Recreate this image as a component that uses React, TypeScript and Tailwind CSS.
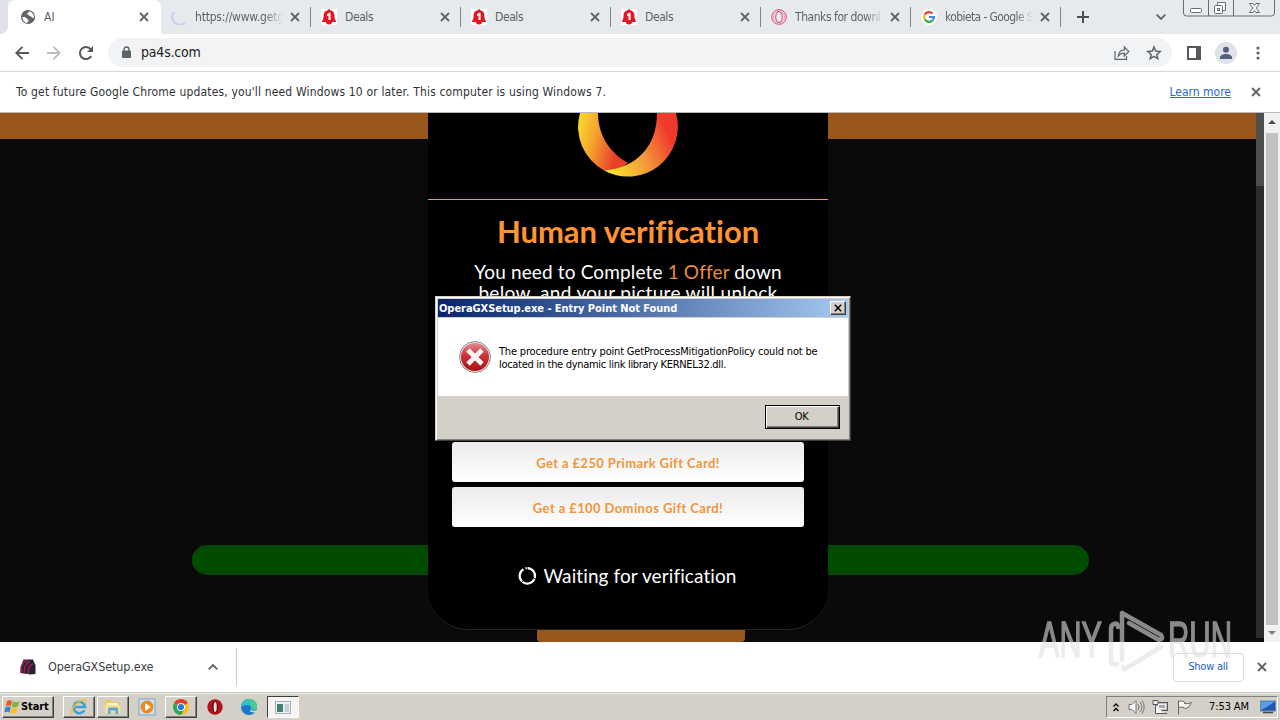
import { ReactNode } from "react";

const TAHOMA = "font-['DejaVu_Sans_Condensed','DejaVu_Sans',sans-serif]";

function Cross({ size = 10, color = "#5f6368", width = 1.8 }: { size?: number; color?: string; width?: number }) {
    return (
        <svg width={size} height={size} viewBox="0 0 10 10" fill="none" stroke={color} strokeWidth={width} className="shrink-0">
            <path d="M1 1l8 8M9 1l-8 8" />
        </svg>
    );
}

function GlobeIcon() {
    return (
        <svg width="16" height="16" viewBox="0 0 16 16">
            <circle cx="8" cy="8" r="7" fill="#5f6368" />
            <path d="M2.3 8.2c2.3-.4 4 .3 4.6 1.6.5 1.1 2 .6 1.5 2.2-.2.9-.8 1.6-1.6 1.9-2.5-.6-4.4-2.9-4.5-5.7zM9.4 2.2c-1 .8-.6 1.7-1.7 1.9-1.3.2-1 1.3.1 1.5 1.4.2 1.2 1.6 2.6 1.7 1.2 0 1 1.5 2.5 1.6l1-.1c.2-3.1-1.6-5.8-4.5-6.6z" fill="#fff" />
        </svg>
    );
}

function LoadingIcon() {
    return (
        <svg width="16" height="16" viewBox="0 0 16 16" fill="none">
            <path d="M3.2 3A7 7 0 0 0 14 13.4" stroke="#c5cdf5" strokeWidth="2" />
        </svg>
    );
}

function BellIcon() {
    return (
        <svg width="16" height="16" viewBox="0 0 16 16">
            <rect width="16" height="16" fill="#fff" />
            <path d="M6.6 1.2a1.5 1.5 0 0 1 2.8 0c2.6.6 4 2.4 4 4.9 0 3 .3 4.6 1.5 5.900v1H1.100v-1c1.200-1.300 1.500-2.900 1.500-5.900 0-2.500 1.400-4.300 4-4.900z" fill="#e3171f" />
            <path d="M5 13h6a3 2.500 0 0 1-6 0z" fill="#e3171f" />
            <path d="M6 5.200L8 3.700h1.600v7.300H7.500V6.400L6 7.200z" fill="#fff" />
        </svg>
    );
}

function OperaOutlineIcon() {
    return (
        <svg width="16" height="16" viewBox="0 0 16 16" fill="none" stroke="#e0466e" strokeWidth="1">
            <circle cx="8" cy="8" r="7.300" />
            <circle cx="8" cy="8" r="5.600" strokeOpacity=".45" />
            <ellipse cx="8" cy="8" rx="3.300" ry="5.500" />
        </svg>
    );
}

function GoogleIcon() {
    return (
        <svg width="16" height="16" viewBox="0 0 16 16">
            <circle cx="8" cy="8" r="8" fill="#fff" />
            <g fill="none" strokeWidth="2.200">
                <path d="M11.500 4.500A4.900 4.900 0 0 0 3.700 5.700" stroke="#ea4335" />
                <path d="M3.700 5.700a5 5 0 0 0 0 4.600" stroke="#fbbc05" />
                <path d="M3.700 10.300a4.900 4.900 0 0 0 7.600 1.300" stroke="#34a853" />
                <path d="M11.300 11.600A4.700 4.700 0 0 0 12.900 8H8" stroke="#4285f4" />
            </g>
        </svg>
    );
}

const tabs: { title: string; icon: ReactNode; spacing: string; fade?: boolean }[] = [
    { title: "https://www.getg", icon: <LoadingIcon />, spacing: "tracking-[-0.2px]", fade: true },
    { title: "Deals", icon: <BellIcon />, spacing: "tracking-[-0.4px]" },
    { title: "Deals", icon: <BellIcon />, spacing: "tracking-[-0.4px]" },
    { title: "Deals", icon: <BellIcon />, spacing: "tracking-[-0.4px]" },
    { title: "Thanks for downl", icon: <OperaOutlineIcon />, spacing: "tracking-[-0.45px]", fade: true },
    { title: "kobieta - Google S", icon: <GoogleIcon />, spacing: "tracking-[-0.6px]", fade: true },
];

function TabStrip() {
    return (
        <div className="flex h-[34px] shrink-0 bg-[#e7eaed] text-[12px] text-[#5f6368]">
            <div className="flex w-2 items-end bg-white">
                <div className="h-full w-2 rounded-br-lg bg-[#dee1e6]" />
            </div>
            <div className="flex w-[153px] items-center rounded-t-lg bg-white pr-3 pl-3">
                <GlobeIcon />
                <span className="ml-2 grow">AI</span>
                <Cross />
            </div>
            {tabs.map((tab, i) => (
                <div key={i} className="flex w-[150px] items-center">
                    <div className="flex grow items-center pl-[10px]">
                        {tab.icon}
                        <span className={`ml-2 w-[88px] overflow-hidden whitespace-nowrap ${tab.spacing} ${tab.fade ? "mask-r-from-80%" : ""}`}>{tab.title}</span>
                        <span className="ml-[7px]">
                            <Cross />
                        </span>
                    </div>
                    <div className="h-5 w-px bg-[#80868b]" />
                </div>
            ))}
            <div className="flex grow items-center pl-4">
                <svg width="12" height="12" viewBox="0 0 12 12" stroke="#4b4f54" strokeWidth="2">
                    <path d="M6 0v12M0 6h12" />
                </svg>
                <svg className="ml-[67px]" width="10" height="6" viewBox="0 0 10 6" fill="none" stroke="#5f6368" strokeWidth="1.800">
                    <path d="M.7.7L5 5 9.300.7" />
                </svg>
            </div>
            <svg className="mr-1 shrink-0" width="94" height="18" viewBox="0 0 94 18" fill="none" stroke="#686b73" strokeWidth="1">
                <path d="M1.500 0v13q0 3 3 3h85q3 0 3-3V0M26.500 0v16M51.500 0v16" />
                <rect x="8.500" y="8.500" width="11" height="4" rx="1" fill="#fff" />
                <path d="M35.500 5V2.500h8v8H41" fill="#fff" />
                <rect x="32.500" y="5.500" width="8" height="8" rx="1" fill="#fff" />
                <rect x="35.500" y="8.500" width="2" height="2" />
                <path d="M67.500 3.500h3.500l1.500 2 1.500-2h3.500l-3.200 4.500 3.200 4.500h-3.500l-1.500-2-1.500 2h-3.500l3.200-4.500z" fill="#fff" />
            </svg>
        </div>
    );
}

function Toolbar() {
    return (
        <div className="flex h-[38px] shrink-0 items-center border-b border-[#d5d7da] bg-white pl-[15px]">
            <svg width="14" height="14" viewBox="0 0 14 14" fill="none" stroke="#55585d" strokeWidth="1.900">
                <path d="M14 7H1.500M7.500.8L1.300 7l6.200 6.200" />
            </svg>
            <svg className="ml-[18px]" width="14" height="14" viewBox="0 0 14 14" fill="none" stroke="#babcbe" strokeWidth="1.900">
                <path d="M0 7h12.500M6.500.8L12.700 7l-6.200 6.200" />
            </svg>
            <svg className="ml-[18px]" width="14" height="14" viewBox="0 0 14 14" fill="none" stroke="#55585d" strokeWidth="2">
                <path d="M12.200 10A6 6 0 1 1 11.600 3.200" />
                <path d="M14 0v6H8z" fill="#55585d" stroke="none" />
            </svg>
            <div className="ml-[15px] flex h-[29px] w-[1064px] items-center rounded-full bg-[#f1f3f4] pr-[10px] pl-[14px]">
                <svg width="9" height="13" viewBox="0 0 9 13">
                    <path d="M2 6V3.500a2.500 2.500 0 0 1 5 0V6" fill="none" stroke="#5f6368" strokeWidth="1.400" />
                    <rect y="4.500" width="9" height="7.500" rx="1" fill="#5f6368" />
                </svg>
                <span className="ml-[10px] grow text-[14px] tracking-[-0.2px] text-[#202124]">pa4s.com</span>
                <svg width="16" height="16" viewBox="0 0 16 16" fill="none" stroke="#5f6368" strokeWidth="1.200">
                    <path d="M1 6v8.400h11.500V11M4.300 11c.3-3.800 2.200-5.900 6-6V2l4.500 4.500L10.300 11V8c-2.600 0-4.600.9-6 3z" />
                </svg>
                <svg className="ml-[16px]" width="16" height="16" viewBox="0 0 16 16" fill="none" stroke="#5f6368" strokeWidth="1.500">
                    <path d="M8 2l1.700 4.100 4.500.4-3.400 2.900 1 4.300L8 11.400l-3.800 2.300 1-4.300L1.800 6.500l4.500-.4z" />
                </svg>
            </div>
            <svg className="ml-[15px]" width="14" height="14" viewBox="0 0 14 14">
                <path d="M1 1h12v12H1z" fill="none" stroke="#55585d" strokeWidth="2" />
                <path d="M9 0h5v14H9z" fill="#55585d" />
            </svg>
            <svg className="ml-[14px]" width="22" height="22" viewBox="0 0 22 22">
                <circle cx="11" cy="11" r="11" fill="#dfe2e8" />
                <circle cx="11" cy="7.800" r="3" fill="#54607c" />
                <path d="M5 17v-1.500c0-2 3-3.500 6-3.500s6 1.500 6 3.500V17z" fill="#54607c" />
            </svg>
            <svg className="ml-[19px]" width="4" height="14" viewBox="0 0 4 14" fill="#5f6368">
                <circle cx="2" cy="2" r="1.600" />
                <circle cx="2" cy="7" r="1.600" />
                <circle cx="2" cy="12" r="1.600" />
            </svg>
        </div>
    );
}

function InfoBar() {
    return (
        <div className="flex h-[41px] shrink-0 items-center border-b border-[#b9b9b9] bg-white pr-[19px] pb-px pl-4 text-[12px] text-[#303236]">
            <span className="grow tracking-[0.16px] whitespace-nowrap">To get future Google Chrome updates, you'll need Windows 10 or later. This computer is using Windows 7.</span>
            <a href="#" className="mr-5 whitespace-nowrap text-[#2b68c9] underline">Learn more</a>
            <Cross size={10} />
        </div>
    );
}

function OperaRing() {
    return (
        <svg width="100" height="64" viewBox="0 0 100 64" className="mx-auto block shrink-0">
            <defs>
                <linearGradient id="ringLeft" x1="0" y1="0" x2=".9" y2=".3">
                    <stop offset="0" stopColor="#f8e02c" />
                    <stop offset=".45" stopColor="#f6a52f" />
                    <stop offset="1" stopColor="#e8402a" />
                </linearGradient>
                <linearGradient id="ringRight" x1="0" y1=".6" x2="1" y2=".2">
                    <stop offset="0" stopColor="#f8e02c" />
                    <stop offset=".45" stopColor="#f4943a" />
                    <stop offset=".85" stopColor="#f0392a" />
                </linearGradient>
            </defs>
            <path d="M2 0A50 50 0 0 0 26 57.500L40 57L50 50C30 39 20 20 20 0z" fill="url(#ringLeft)" />
            <path d="M98 0A50 50 0 0 1 26 57.500C58 55 79 34 79 0z" fill="url(#ringRight)" />
        </svg>
    );
}

function Offer({ children }: { children: ReactNode }) {
    return (
        <button className="mx-6 flex h-10 items-center justify-center rounded-[3px] bg-linear-to-b from-[#ebebeb] to-white pt-[3px] text-[13px] font-bold tracking-[0.4px] text-[#f1953a]">
            {children}
        </button>
    );
}

function VerifyCard() {
    return (
        <div className="flex h-[517px] w-[400px] flex-col rounded-b-[40px] border-b border-[#242424] bg-black font-['Lato',sans-serif] text-white">
            <OperaRing />
            {/* preflight-safe divider */}
            <div className="mt-[22px] h-px shrink-0 bg-[#ff9430]" />
            <h1 className="mt-[12px] text-center text-[31px] leading-[38px] font-bold tracking-[-0.05px] text-[#ff9430] [font-variant-ligatures:none]">Human verification</h1>
            <p className="mt-[11px] h-[181px] text-center text-[19px] leading-[21px] font-normal tracking-[0.15px] whitespace-nowrap">
                You need to Complete <span className="text-[#e58f3c]">1 Offer</span> down
                <br />
                <span className="tracking-[0.32px]">below, and your picture will unlock</span>
            </p>
            <Offer>Get a £250 Primark Gift Card!</Offer>
            <div className="h-[5px]" />
            <Offer>Get a £100 Dominos Gift Card!</Offer>
            <div className="mt-[35px] flex items-center justify-center pr-0.5 text-[19px] font-normal tracking-[0.1px]">
                <svg className="mr-[6px]" width="20" height="20" viewBox="0 0 20 20" fill="none" stroke="#fff" strokeWidth="2.200">
                    <path d="M6.500 3.200A7.700 7.700 0 1 0 8.500 2.400" strokeDasharray="14 .8" />
                </svg>
                Waiting for verification
            </div>
        </div>
    );
}

function Page() {
    return (
        <div className="flex h-[529px] shrink-0 bg-[#0a0a0a]">
            <div className="grid w-[1256px] overflow-hidden">
                <div className="col-start-1 row-start-1">
                    <div className="h-[26px] bg-[#9a571b]" />
                    <div className="mt-[406px] ml-48 h-[30px] w-[897px] rounded-full border-y-4 border-[#064506] bg-[#004d00]" />
                    <div className="mt-[55px] ml-[537px] h-3 w-[208px] rounded-b-[4px] bg-[#9a571b]" />
                </div>
                <div className="col-start-1 row-start-1 ml-[428px]">
                    <VerifyCard />
                </div>
            </div>
            <div className="h-[525px] w-2 bg-[#2c2c2c]">
                <div className="h-[73px] bg-[#4e4e4e]" />
            </div>
            <div className="flex w-4 flex-col items-center bg-[#f1f1f1]">
                <svg width="8" height="20" viewBox="0 0 8 20" fill="#505050">
                    <path d="M0 11l4-4 4 4z" />
                </svg>
                <div className="w-3 grow bg-[#c1c1c1]" />
                <svg width="8" height="17" viewBox="0 0 8 17" fill="#808080">
                    <path d="M0 6l4 4 4-4z" />
                </svg>
            </div>
        </div>
    );
}

function Downloads() {
    return (
        <div className="flex h-[51px] shrink-0 items-center border-b border-[#c6c6bd] bg-white text-[12.500px]">
            <svg className="ml-5" width="16" height="16" viewBox="0 0 16 16">
                <path d="M3.500.5h9.500l2.500 6V15l-5 .5L.5 14V8z" fill="#2a2235" />
                <path d="M1 14C1 6 3 2 7 1.500M4 14.500C4 7 6 3.500 10 2.500M8 15c0-6 1-9 5-10" fill="none" stroke="#a81f50" strokeWidth="1.300" />
            </svg>
            <span className="ml-3 w-[160px] tracking-[-0.1px] text-[#3c4043]">OperaGXSetup.exe</span>
            <svg width="10" height="6" viewBox="0 0 10 6" fill="none" stroke="#5f6368" strokeWidth="1.800">
                <path d="M.7 5.300L5 1l4.300 4.300" />
            </svg>
            <div className="ml-[18px] h-[38px] w-px bg-[#cdcdcd]" />
            <div className="grow" />
            <button className="mr-[13px] h-[29px] w-[71px] rounded-[4px] border border-[#dadce0] pr-px text-[11px] tracking-[-0.25px] text-[#1a62c5]">Show all</button>
            <span className="mr-[13px]">
                <Cross />
            </span>
        </div>
    );
}

function FlagLogo() {
    return (
        <svg width="17" height="16" viewBox="0 0 16 16" className="shrink-0">
            <path d="M2.500 2Q5 .3 7.600 2L6.400 7.300Q4 5.800 1.300 7.300z" fill="#ea5a24" />
            <path d="M8.500 2.500Q11.500 4 15 2.300l-1.500 5.200Q10.500 9 7.300 7.700z" fill="#7eb63b" />
            <path d="M1 8.300Q3.700 6.800 6.200 8.300L5 13.500Q2.500 12-.3 13.500z" fill="#3d83d4" />
            <path d="M7 8.700Q10 10 13.200 8.500l-1.400 5.200Q8.800 15.300 5.800 13.900z" fill="#f9be22" />
        </svg>
    );
}

function IEIcon() {
    return (
        <svg width="18" height="18" viewBox="0 0 18 18" fill="none">
            <path d="M14.300 12.300A5.700 5.700 0 1 1 15 9H4" stroke="#3c9fdd" strokeWidth="2.600" />
            <path d="M2.500 16C-.5 14 5 5 11.500 2.500c4.500-1.700 5.500.3 4 3.500" stroke="#f0bc38" strokeWidth="1.400" />
        </svg>
    );
}

function FolderIcon() {
    return (
        <svg width="18" height="18" viewBox="0 0 18 18">
            <path d="M1 2h6l1 2h8v11H1z" fill="#e9c968" />
            <path d="M3 5h11v8H3z" fill="#fff6cf" />
            <path d="M1 7h16l-1 8H1z" fill="#f5df90" />
            <path d="M4 16v-5q0-1.500 1.500-1.500h7Q14 9.500 14 11v5h-2.500v-3.500h-5V16z" fill="#57a9d8" />
        </svg>
    );
}

function PlayerIcon() {
    return (
        <svg width="18" height="18" viewBox="0 0 18 18">
            <rect x="1" y="1" width="16" height="16" fill="#c9e2f4" stroke="#7aa8ca" />
            <circle cx="9" cy="9" r="6.500" fill="#f18a1c" />
            <path d="M7 5l6 4-6 4z" fill="#fff" />
        </svg>
    );
}

function ChromeIcon() {
    return (
        <svg width="18" height="18" viewBox="0 0 18 18">
            <circle cx="9" cy="9" r="8" fill="#fbc116" />
            <path d="M9 9L2.100 5A8 8 0 0 1 15.900 5z" fill="#e33b2e" />
            <path d="M9 9L2.100 5A8 8 0 0 0 9 17l3.500-6z" fill="#2da94f" />
            <circle cx="9" cy="9" r="4" fill="#fff" />
            <circle cx="9" cy="9" r="3.100" fill="#2b76e5" />
        </svg>
    );
}

function OperaIcon() {
    return (
        <svg width="18" height="18" viewBox="0 0 18 18">
            <circle cx="9" cy="9" r="7.700" fill="#b5121b" />
            <ellipse cx="9" cy="9" rx="2.800" ry="6" fill="#3b0808" />
            <ellipse cx="9.200" cy="9" rx="1.600" ry="5" fill="#f4dada" />
        </svg>
    );
}

function EdgeIcon() {
    return (
        <svg width="18" height="18" viewBox="0 0 18 18">
            <circle cx="9" cy="9" r="8" fill="#1b75c8" />
            <path d="M1 9a8 8 0 0 1 16-.5c.3 3-2.500 4-6.500 3.200 1.300-1.700.7-4.200-2.500-4.500-3-.2-5.500 0-7 1.800z" fill="#37bfc0" />
            <path d="M9 1a8 8 0 0 1 8 8c0 1.500-1.300 2.800-3 3L10.500 6z" fill="#5dd06a" opacity=".6" />
            <path d="M10.700 8.500c.5 1.300-.5 2.300-.5 3 1.500 1.500 4 1.500 6 .5l1 3-7-1z" fill="#d5d2ca" />
        </svg>
    );
}

function AppIcon() {
    return (
        <svg width="18" height="18" viewBox="0 0 18 18">
            <rect x="1.500" y="3.500" width="15" height="12" fill="#eff2f4" stroke="#a5adb5" />
            <rect x="3" y="6" width="6" height="8" fill="#42826d" />
            <rect x="10.500" y="6" width="4.500" height="8" fill="#c7ced6" />
        </svg>
    );
}

const RAISED = "border border-t-white border-r-[#404040] border-b-[#404040] border-l-white shadow-[inset_-1px_-1px_0_#808080]";

function TaskButton({ children, look = "" }: { children: ReactNode; look?: string }) {
    return <div className={`flex h-[22px] w-8 items-center justify-center ${look}`}>{children}</div>;
}

function Taskbar() {
    return (
        <div className="flex h-[27px] shrink-0 items-center border-t border-[#f3f1ec] bg-[#d4d0c8] pr-0.5 pl-0.5">
            <button className={`flex h-[22px] w-[52px] items-center pl-px text-[11px] font-bold text-black ${RAISED}`}>
                <FlagLogo />
                <span className="tracking-[-0.1px]">Start</span>
            </button>
            <div className="ml-[9px] flex gap-0.5">
                <TaskButton look={RAISED}><IEIcon /></TaskButton>
                <TaskButton look={RAISED}><FolderIcon /></TaskButton>
                <TaskButton><PlayerIcon /></TaskButton>
                <TaskButton look={RAISED}><ChromeIcon /></TaskButton>
                <TaskButton><OperaIcon /></TaskButton>
                <TaskButton><EdgeIcon /></TaskButton>
                <TaskButton look="border border-t-[#404040] border-l-[#404040] border-r-white border-b-white bg-[#f6f5f3]"><AppIcon /></TaskButton>
            </div>
            <div className="grow" />
            <div className="flex h-[22px] w-[172px] items-center border border-t-[#808080] border-r-white border-b-white border-l-[#808080] pl-1.5">
                <svg width="6" height="9" viewBox="0 0 6 9" fill="none" stroke="#000" strokeWidth="1.300">
                    <path d="M.5 3.500L3 1l2.500 2.500M.5 8L3 5.500 5.500 8" />
                </svg>
                <svg className="ml-[9px]" width="17" height="16" viewBox="0 0 17 16" fill="none" stroke="#777">
                    <path d="M1 5.500h3l4-4v13l-4-4H1z" fill="#f7f7f7" />
                    <path d="M10 5q2 3 0 6M12 3q4 5 0 10M14 1.500q4.500 6.500 0 13" />
                </svg>
                <svg className="ml-[7px]" width="17" height="16" viewBox="0 0 17 16" fill="none" stroke="#555">
                    <rect x="4.500" y="3.500" width="11" height="8" fill="#bfc1c2" />
                    <path d="M1 1.500h5v4H1zM3.500 5.500v9h9M7 14.500h8" fill="#f3f3f3" />
                    <rect x="6.500" y="5.500" width="7" height="4" fill="#a9abac" stroke="#eee" />
                </svg>
                <svg className="ml-[7px]" width="17" height="16" viewBox="0 0 17 16" fill="#faf9f7" stroke="#666">
                    <path d="M2.500 15.500V1.500M2.500 2.500Q6 1 8.500 3v1.500q3 1 7-1l-3 5q-3 2-5.500 0-2-1-4.500 0" />
                </svg>
                <span className="ml-4 w-[43px] text-[11px] tracking-[-0.1px] whitespace-nowrap text-black">7:53 AM</span>
                <svg className="ml-[8px]" width="16" height="14" viewBox="0 0 16 14">
                    <rect x=".5" y="1" width="15" height="10" fill="#2059b5" stroke="#6b87af" />
                    <path d="M1 1.500h14L5 8l-4 2z" fill="#5aa0e4" />
                    <path d="M3 12.500h10" stroke="#444" strokeWidth="1.500" />
                </svg>
            </div>
        </div>
    );
}

function ErrorDialog() {
    return (
        <div role="alertdialog" className="absolute top-[296px] left-[435px] flex h-[145px] w-[416px] flex-col border border-t-[#d4d0c8] border-r-[#404040] border-b-[#404040] border-l-[#d4d0c8] bg-[#d4d0c8] p-0.5 text-[11px] text-black shadow-[inset_1px_1px_0_#fff,inset_-1px_-1px_0_#808080]">
            <div className="flex h-[18px] shrink-0 items-center bg-linear-to-r from-[#0a246a] to-[#a6caf0] pr-0.5 pl-px">
                <span className="grow pt-0.5 font-bold tracking-[-0.05px] text-white">OperaGXSetup.exe - Entry Point Not Found</span>
                <button className={`flex h-[14px] w-4 items-center justify-center bg-[#d4d0c8] ${RAISED}`}>
                    <Cross size={8} color="#000" />
                </button>
            </div>
            <div className="mt-px flex h-[78px] shrink-0 bg-white pt-[23px] pl-[21px]">
                <svg width="32" height="32" viewBox="0 0 32 32" className="shrink-0">
                    <defs>
                        <linearGradient id="err" x1="0" y1="0" x2="0" y2="1">
                            <stop offset="0" stopColor="#e58c8e" />
                            <stop offset=".45" stopColor="#cc3237" />
                            <stop offset="1" stopColor="#a81014" />
                        </linearGradient>
                    </defs>
                    <circle cx="16" cy="16" r="15.500" fill="#e8e8e8" stroke="#8e8e8e" />
                    <circle cx="16" cy="16" r="14" fill="url(#err)" />
                    <path d="M9 9l14 14M23 9L9 23" stroke="#f5f3f3" strokeWidth="4.800" />
                </svg>
                <p className="mt-1 ml-2 leading-[13px] tracking-[-0.18px] whitespace-nowrap">
                    The procedure entry point GetProcessMitigationPolicy could not be
                    <br />
                    <span className="tracking-[-0.3px]">located in the dynamic link library KERNEL32.dll.</span>
                </p>
            </div>
            <div className="flex grow items-center justify-end pr-2">
                <button className="h-6 w-[75px] border border-black pt-px pr-0.5 text-[11px] tracking-[-0.3px] shadow-[inset_1px_1px_0_#fff,inset_-1px_-1px_0_#404040,inset_-2px_-2px_0_#808080]">OK</button>
            </div>
        </div>
    );
}

function Watermark() {
    return (
        <svg className="pointer-events-none absolute top-[605px] left-[1034px]" width="204" height="72" viewBox="0 0 204 72" opacity=".6">
            <g fill="#e0e0e0" stroke="#e0e0e0" strokeWidth="1.500" fontFamily="'Liberation Sans Narrow', 'Liberation Sans', sans-serif" fontSize="50">
                <text x="5" y="52" textLength="63" lengthAdjust="spacingAndGlyphs">ANY</text>
                <text x="134" y="52" textLength="64" lengthAdjust="spacingAndGlyphs">RUN</text>
            </g>
            <g fill="none" stroke="#e0e0e0" strokeWidth="4.500" strokeLinejoin="round" strokeLinecap="round">
                <path d="M84 22q0-5-4-3-3 1-3 5v31q0 6 6 4" />
                <path d="M88 54V8l39 22q3 4-2 5L95 18" />
                <path d="M94 62q-5 4-5 0M91 64l36-22" />
            </g>
        </svg>
    );
}

export default function App() {
    return (
        <div className={`relative flex h-[720px] w-[1280px] flex-col overflow-hidden bg-white ${TAHOMA}`}>
            <TabStrip />
            <Toolbar />
            <InfoBar />
            <Page />
            <Downloads />
            <Taskbar />
            <ErrorDialog />
            <Watermark />
        </div>
    );
}
